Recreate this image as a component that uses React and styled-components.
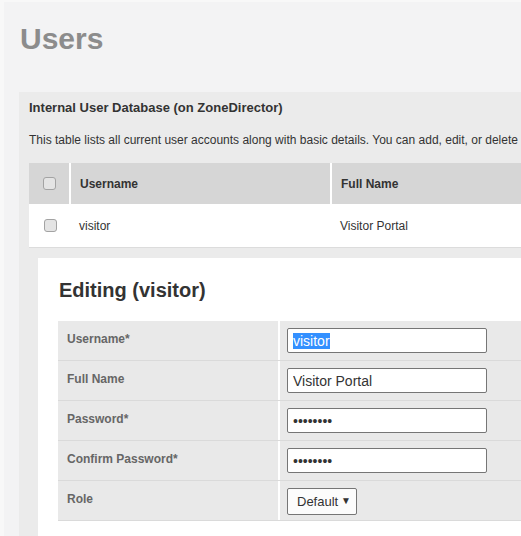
import { useEffect, useRef } from "react";
import styled, { createGlobalStyle } from "styled-components";

const GlobalStyle = createGlobalStyle`
    html, body {
        margin: 0;
        padding: 0;
        background-color: #f8f8f8;
        overflow: hidden;
    }
    body {
        font-family: "Liberation Sans", Arial, sans-serif;
        color: #333;
    }
`;

const users = [{ username: "visitor", fullName: "Visitor Portal" }];

const fields = [
    { label: "Username*", type: "text", value: "visitor", selected: true },
    { label: "Full Name", type: "text", value: "Visitor Portal" },
    { label: "Password*", type: "password", value: "12345678" },
    { label: "Confirm Password*", type: "password", value: "12345678" },
];

const App = () => {
    const firstRef = useRef();

    useEffect(() => {
        if (firstRef.current) {
            firstRef.current.focus();
            firstRef.current.select();
        }
    }, []);

    return (
        <>
            <GlobalStyle />
            <Page>
                <Title>Users</Title>
                <Section>
                    <SectionTitle>Internal User Database (on ZoneDirector)</SectionTitle>
                    <Description>
                        This table lists all current user accounts along with basic details. You can add, edit, or delete
                    </Description>
                    <UserTable>
                        <HeadRow>
                            <CheckCell><Check type="checkbox" /></CheckCell>
                            <HeadCell $width={261}>Username</HeadCell>
                            <HeadCell $grow>Full Name</HeadCell>
                        </HeadRow>
                        {users.map((u) => (
                            <BodyRow key={u.username}>
                                <CheckCell $plain><Check type="checkbox" /></CheckCell>
                                <BodyCell $width={261}>{u.username}</BodyCell>
                                <BodyCell $grow>{u.fullName}</BodyCell>
                            </BodyRow>
                        ))}
                    </UserTable>

                    <EditPanel>
                        <EditTitle>Editing (visitor)</EditTitle>
                        <Form>
                            {fields.map((f) => (
                                <FormRow key={f.label}>
                                    <Label>{f.label}</Label>
                                    <ValueCell>
                                        <TextInput
                                            ref={f.selected ? firstRef : undefined}
                                            type={f.type}
                                            defaultValue={f.value}
                                        />
                                    </ValueCell>
                                </FormRow>
                            ))}
                            <FormRow>
                                <Label>Role</Label>
                                <ValueCell>
                                    <SelectWrap>
                                        <RoleSelect defaultValue="Default">
                                            <option>Default</option>
                                        </RoleSelect>
                                        <Arrow>▼</Arrow>
                                    </SelectWrap>
                                </ValueCell>
                            </FormRow>
                        </Form>
                    </EditPanel>
                </Section>
            </Page>
        </>
    );
};

export default App;

const Page = styled.div`
    margin: 2px 0 0 4px;
    padding: 15px 0 0 15px;
    height: 534px;
    box-sizing: border-box;
    background-color: #f3f3f4;
    overflow: hidden;
`;

const Title = styled.h1`
    margin: 0 0 31px 1px;
    font-size: 30px;
    line-height: 44px;
    font-weight: 700;
    color: #8c8c8c;
`;

const Section = styled.div`
    width: 900px;
    padding: 8px 10px 0 10px;
    background-color: #ebebeb;
    min-height: 500px;
`;

const SectionTitle = styled.h3`
    margin: 0;
    font-size: 13px;
    line-height: 16px;
    font-weight: 700;
    color: #333;
`;

const Description = styled.p`
    margin: 17px 0 0;
    font-size: 12px;
    line-height: 15px;
    color: #333;
    white-space: nowrap;
`;

const UserTable = styled.div`
    margin-top: 15px;
    display: flex;
    flex-direction: column;
`;

const HeadRow = styled.div`
    display: flex;
    height: 41px;
    background-color: #d6d6d6;
`;

const BodyRow = styled.div`
    display: flex;
    height: 43px;
    background-color: #fff;
    border-bottom: 1px solid #dcdcdc;
`;

const CheckCell = styled.div`
    width: 42px;
    flex: none;
    display: flex;
    align-items: center;
    justify-content: center;
    border-right: ${(p) => (p.$plain ? "none" : "2px solid #fff")};
    box-sizing: border-box;
    padding-left: 1px;
`;

const HeadCell = styled.div`
    flex: ${(p) => (p.$grow ? "1" : "none")};
    width: ${(p) => (p.$width ? `${p.$width}px` : "auto")};
    display: flex;
    align-items: center;
    padding: 0 9px;
    border-right: 2px solid #fff;
    font-size: 12px;
    font-weight: 700;
    color: #333;
    box-sizing: border-box;
`;

const BodyCell = styled.div`
    flex: ${(p) => (p.$grow ? "1" : "none")};
    width: ${(p) => (p.$width ? `${p.$width}px` : "auto")};
    display: flex;
    align-items: center;
    padding: 0 9px 0 8px;
    font-size: 12px;
    color: #333;
    box-sizing: border-box;
`;

const Check = styled.input`
    appearance: none;
    margin: 0;
    width: 13px;
    height: 13px;
    border: 1px solid #a3a3a3;
    border-radius: 3px;
    background-color: #e4e4e4;
    box-sizing: border-box;
`;

const EditPanel = styled.div`
    margin: 10px 0 0 9px;
    padding: 20px 20px 40px 20px;
    background-color: #fff;
`;

const EditTitle = styled.h2`
    margin: 0 0 19px 1px;
    font-size: 20px;
    line-height: 24px;
    font-weight: 700;
    color: #333;
`;

const Form = styled.div`
    display: flex;
    flex-direction: column;
    width: 600px;
`;

const FormRow = styled.div`
    display: flex;
    height: 40px;
    background-color: #e9e9e9;
    border-bottom: 1px solid #dadada;
    box-sizing: border-box;
`;

const Label = styled.div`
    width: 222px;
    flex: none;
    padding: 11px 9px 0;
    box-sizing: border-box;
    border-right: 2px solid #fff;
    font-size: 12px;
    font-weight: 700;
    color: #666;
`;

const ValueCell = styled.div`
    flex: 1;
    padding: 7px 7px 0;
`;

const TextInput = styled.input`
    width: 200px;
    height: 25px;
    box-sizing: border-box;
    padding: 1px 5px;
    border: 1px solid #767676;
    border-radius: 2px;
    background-color: #fff;
    font-family: "Liberation Sans", Arial, sans-serif;
    font-size: 14px;
    color: #333;
    outline: none;
    &::selection {
        background-color: #3390ff;
        color: #fff;
    }
`;

const SelectWrap = styled.div`
    position: relative;
    display: inline-block;
`;

const RoleSelect = styled.select`
    appearance: none;
    width: 70px;
    height: 27px;
    box-sizing: border-box;
    padding: 0 0 0 9px;
    border: 1px solid #767676;
    border-radius: 2px;
    background-color: #fcfcfc;
    font-family: "Liberation Sans", Arial, sans-serif;
    font-size: 13px;
    color: #333;
    outline: none;
`;

const Arrow = styled.span`
    position: absolute;
    right: 6px;
    top: 8px;
    font-size: 10px;
    line-height: 10px;
    color: #333;
    pointer-events: none;
`;
